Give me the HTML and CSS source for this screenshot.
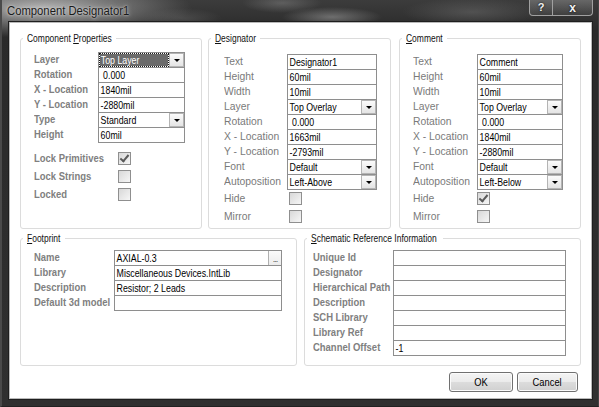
FILE: index.html
```html
<!DOCTYPE html>
<html>
<head>
<meta charset="utf-8">
<title>Component Designator1</title>
<link rel="stylesheet" href="styles.css">
</head>
<body>
<div class="window">
  <div class="titlebar">
    <span class="title">Component Designator1</span>
    <div class="caption">
      <span class="cbtn help">?</span><span class="cbtn close">x</span>
    </div>
  </div>
  <div class="client">
    <div class="top-row">
      <fieldset class="group g-comp">
        <legend><span class="lg">Component <u>P</u>roperties</span></legend>
        <div class="form f-comp">
          <span class="lbl strong">Layer</span><div class="combo focus"><span class="sel"><span class="val">Top Layer</span></span><span class="drop"></span></div>
          <span class="lbl strong">Rotation</span><div class="box"><span class="val">&nbsp;0.000</span></div>
          <span class="lbl strong">X - Location</span><div class="box"><span class="val">1840mil</span></div>
          <span class="lbl strong">Y - Location</span><div class="box"><span class="val">-2880mil</span></div>
          <span class="lbl strong">Type</span><div class="combo"><span class="val">Standard</span><span class="drop"></span></div>
          <span class="lbl strong">Height</span><div class="box"><span class="val">60mil</span></div>
        </div>
        <div class="checks c-comp">
          <span class="lbl strong">Lock Primitives</span><span class="chk on"></span>
          <span class="lbl strong">Lock Strings</span><span class="chk"></span>
          <span class="lbl strong">Locked</span><span class="chk"></span>
        </div>
      </fieldset>

      <fieldset class="group g-des">
        <legend><span class="lg"><u>D</u>esignator</span></legend>
        <div class="form f-des">
          <span class="lbl">Text</span><div class="box"><span class="val">Designator1</span></div>
          <span class="lbl">Height</span><div class="box"><span class="val">60mil</span></div>
          <span class="lbl">Width</span><div class="box"><span class="val">10mil</span></div>
          <span class="lbl">Layer</span><div class="combo"><span class="val">Top Overlay</span><span class="drop"></span></div>
          <span class="lbl">Rotation</span><div class="box"><span class="val">&nbsp;0.000</span></div>
          <span class="lbl">X - Location</span><div class="box"><span class="val">1663mil</span></div>
          <span class="lbl">Y - Location</span><div class="box"><span class="val">-2793mil</span></div>
          <span class="lbl">Font</span><div class="combo"><span class="val">Default</span><span class="drop"></span></div>
          <span class="lbl">Autoposition</span><div class="combo"><span class="val">Left-Above</span><span class="drop"></span></div>
        </div>
        <div class="checks c-des">
          <span class="lbl">Hide</span><span class="chk"></span>
          <span class="lbl">Mirror</span><span class="chk"></span>
        </div>
      </fieldset>

      <fieldset class="group g-com">
        <legend><span class="lg"><u>C</u>omment</span></legend>
        <div class="form f-com">
          <span class="lbl">Text</span><div class="box"><span class="val">Comment</span></div>
          <span class="lbl">Height</span><div class="box"><span class="val">60mil</span></div>
          <span class="lbl">Width</span><div class="box"><span class="val">10mil</span></div>
          <span class="lbl">Layer</span><div class="combo"><span class="val">Top Overlay</span><span class="drop"></span></div>
          <span class="lbl">Rotation</span><div class="box"><span class="val">&nbsp;0.000</span></div>
          <span class="lbl">X - Location</span><div class="box"><span class="val">1840mil</span></div>
          <span class="lbl">Y - Location</span><div class="box"><span class="val">-2880mil</span></div>
          <span class="lbl">Font</span><div class="combo"><span class="val">Default</span><span class="drop"></span></div>
          <span class="lbl">Autoposition</span><div class="combo"><span class="val">Left-Below</span><span class="drop"></span></div>
        </div>
        <div class="checks c-com">
          <span class="lbl">Hide</span><span class="chk on"></span>
          <span class="lbl">Mirror</span><span class="chk"></span>
        </div>
      </fieldset>
    </div>

    <div class="bottom-row">
      <fieldset class="group g-foot">
        <legend><span class="lg"><u>F</u>ootprint</span></legend>
        <div class="form f-foot">
          <span class="lbl strong">Name</span><div class="box browse"><span class="val">AXIAL-0.3</span><span class="dots">...</span></div>
          <span class="lbl strong">Library</span><div class="box"><span class="val">Miscellaneous Devices.IntLib</span></div>
          <span class="lbl strong">Description</span><div class="box"><span class="val">Resistor; 2 Leads</span></div>
          <span class="lbl strong">Default 3d model</span><div class="box"><span class="val"></span></div>
        </div>
      </fieldset>

      <fieldset class="group g-sch">
        <legend><span class="lg"><u>S</u>chematic Reference Information</span></legend>
        <div class="form f-sch">
          <span class="lbl strong">Unique Id</span><div class="box"><span class="val"></span></div>
          <span class="lbl strong">Designator</span><div class="box"><span class="val"></span></div>
          <span class="lbl strong">Hierarchical Path</span><div class="box"><span class="val"></span></div>
          <span class="lbl strong">Description</span><div class="box"><span class="val"></span></div>
          <span class="lbl strong">SCH Library</span><div class="box"><span class="val"></span></div>
          <span class="lbl strong">Library Ref</span><div class="box"><span class="val"></span></div>
          <span class="lbl strong">Channel Offset</span><div class="box"><span class="val">-1</span></div>
        </div>
      </fieldset>
    </div>

    <div class="buttons">
      <button class="btn btn-ok"><span class="bt">OK</span></button>
      <button class="btn btn-cancel"><span class="bt">Cancel</span></button>
    </div>
  </div>
</div>
</body>
</html>
```

FILE: styles.css
```css
html, body {
  margin: 0;
  padding: 0;
}
body {
  width: 599px;
  height: 407px;
  overflow: hidden;
  background: #2e2e2e;
  font-family: "Liberation Sans", Arial, sans-serif;
}

.window {
  width: 599px;
  height: 407px;
  display: flex;
  flex-direction: column;
  box-sizing: border-box;
  background:
    radial-gradient(ellipse 150px 30px at 40px 8px, rgba(185,185,185,0.95), rgba(160,160,160,0.5) 55%, rgba(160,160,160,0) 100%),
    radial-gradient(ellipse 50px 10px at 330px 17px, rgba(150,150,150,0.6), rgba(150,150,150,0) 100%),
    radial-gradient(ellipse 40px 10px at 280px 3px, rgba(130,130,130,0.5), rgba(130,130,130,0) 100%),
    radial-gradient(ellipse 70px 14px at 470px 12px, rgba(110,110,110,0.5), rgba(110,110,110,0) 100%),
    radial-gradient(ellipse 40px 10px at 180px 18px, rgba(90,90,90,0.6), rgba(90,90,90,0) 100%),
    linear-gradient(#3c3c3c, #2a2a2a 30px, #303030 100%);
  border-left: 2px solid #4a4a4a;
  border-right: 1px solid #444;
  border-bottom: 1px solid #222;
}

.titlebar {
  height: 22px;
  display: flex;
  align-items: flex-start;
  padding-left: 5px;
}
.title {
  margin-top: 4px;
  font-size: 12px;
  color: #1a1a1a;
  text-shadow: 0 0 5px #cfcfcf, 0 0 2px #d6d6d6;
  display: inline-block;
  transform: scaleX(0.94);
  transform-origin: 0 50%;
}
.caption {
  margin-left: auto;
  margin-right: 5px;
  display: flex;
  height: 15px;
  border: 1px solid #a0a0a0;
  border-top: none;
  border-radius: 0 0 4px 4px;
  overflow: hidden;
  background: linear-gradient(rgba(255,255,255,0.22), rgba(255,255,255,0.06));
}
.cbtn {
  display: flex;
  align-items: center;
  justify-content: center;
  color: #f2f2f2;
  font-weight: bold;
  font-size: 11px;
  line-height: 1;
  text-shadow: 0 0 2px #000;
}
.help {
  width: 22px;
  border-right: 1px solid #a0a0a0;
}
.close {
  width: 39px;
  font-size: 12px;
}

.client {
  flex: 1;
  margin: 0 6px 7px 7px;
  background: #fff;
  border: 1px solid #b9b9b9;
  box-shadow: 0 0 0 1px #1e1e1e;
  padding: 9px 10px 0 10px;
  display: flex;
  flex-direction: column;
}

/* groups */
.group {
  margin: 0;
  padding: 0;
  border: 1px solid #dcdcdc;
  border-radius: 3px;
  box-sizing: border-box;
  min-width: 0;
}
.group legend {
  margin-left: 2px;
  padding: 0 4px;
  font-size: 11px;
  line-height: 13px;
  color: #111;
  white-space: nowrap;
  box-sizing: content-box;
}
.lg {
  display: inline-block;
  transform: scaleX(0.77);
  transform-origin: 0 50%;
}
.g-comp legend { width: 85px; }
.g-des legend  { width: 41px; }
.g-com legend  { width: 37px; }
.g-foot legend { width: 34px; }
.g-sch legend  { width: 128px; }

.top-row {
  display: flex;
  height: 197px;
}
.g-comp { width: 182px; }
.g-des { width: 183px; margin-left: 6px; }
.g-com { width: 182px; margin-left: 8px; }

.bottom-row {
  display: flex;
  height: 134px;
  margin-top: 3px;
}
.g-foot { width: 277px; }
.g-sch { width: 277px; margin-left: 7px; }

/* form rows */
.form {
  display: grid;
  grid-auto-rows: 15px;
  align-items: start;
}
.f-comp { grid-template-columns: 64px 87px; margin: 7px 0 0 13px; }
.f-des  { grid-template-columns: 63px 90px; margin: 9px 0 0 15px; }
.f-com  { grid-template-columns: 64px 86px; margin: 9px 0 0 13px; }
.f-foot { grid-template-columns: 80px 168px; margin: 5px 0 0 13px; }
.f-sch  { grid-template-columns: 80px 173px; margin: 5px 0 0 8px; }

.lbl {
  font-size: 11px;
  line-height: 15px;
  color: #7a7a7a;
  white-space: nowrap;
  display: inline-block;
  transform: scaleX(0.94);
  transform-origin: 0 50%;
}
.lbl.strong {
  color: #808080;
  font-weight: bold;
  transform: scaleX(0.86);
}

.box, .combo {
  position: relative;
  height: 16px;
  box-sizing: border-box;
  border: 1px solid #8e8e8e;
  background: #fff;
  display: flex;
  align-items: center;
  overflow: hidden;
}
.val {
  font-size: 11px;
  color: #000;
  padding-left: 2px;
  white-space: nowrap;
  line-height: 14px;
  display: inline-block;
  transform: scaleX(0.8);
  transform-origin: 0 50%;
  flex: none;
}
.box .val, .combo > .val { margin-right: auto; }
.combo .val { padding-left: 2px; }
.combo .sel {
  flex: 1;
  align-self: stretch;
  margin: 1px 1px 1px 1px;
  background: #6b6b6b;
  outline: 1px dotted #1a1a1a;
  display: flex;
  align-items: center;
}
.combo .sel .val {
  color: #fff;
  line-height: 12px;
  padding-left: 1px;
}
.drop {
  width: 15px;
  height: 14px;
  margin-left: auto;
  box-sizing: border-box;
  border: 1px solid #b4b4b4;
  background: linear-gradient(#fbfbfb, #e4e4e4);
  position: relative;
  flex: none;
}
.drop::after {
  content: "";
  position: absolute;
  left: 4px;
  top: 5px;
  border-left: 3px solid transparent;
  border-right: 3px solid transparent;
  border-top: 3px solid #000;
}

.browse .dots {
  width: 13px;
  height: 14px;
  margin-left: auto;
  box-sizing: border-box;
  border-left: 1px solid #b0b0b0;
  background: linear-gradient(#fbfbfb, #ececec);
  font-size: 9px;
  color: #555;
  text-align: center;
  line-height: 16px;
  letter-spacing: -1px;
}

/* checkboxes */
.checks {
  display: grid;
  grid-auto-rows: 18px;
  align-items: center;
}
.c-comp { grid-template-columns: 84px 13px; margin: 7px 0 0 13px; }
.c-des  { grid-template-columns: 65px 13px; margin: 0 0 0 15px; }
.c-com  { grid-template-columns: 64px 13px; margin: 0 0 0 13px; }
.chk {
  width: 13px;
  height: 13px;
  box-sizing: border-box;
  border: 1px solid #8f8f8f;
  background: linear-gradient(135deg, #d8d8d8, #f6f6f6);
  position: relative;
}
.chk.on::after {
  content: "";
  position: absolute;
  left: 3px;
  top: 0px;
  width: 3px;
  height: 7px;
  border-right: 2px solid #5a5a5a;
  border-bottom: 2px solid #5a5a5a;
  transform: rotate(40deg);
}

/* buttons */
.buttons {
  display: flex;
  justify-content: flex-end;
  gap: 4px;
  margin-top: 6px;
  padding-right: 3px;
}
.btn {
  height: 20px;
  box-sizing: border-box;
  border: 1px solid #707070;
  border-radius: 3px;
  background: linear-gradient(#f4f4f4 0%, #ebebeb 48%, #dcdcdc 52%, #d0d0d0 100%);
  box-shadow: inset 0 0 0 1px #fbfbfb;
  font-family: "Liberation Sans", Arial, sans-serif;
  font-size: 11px;
  color: #000;
  padding: 0;
}
.bt {
  display: inline-block;
  transform: scaleX(0.85);
}
.btn-ok { width: 64px; }
.btn-cancel { width: 61px; }
```
